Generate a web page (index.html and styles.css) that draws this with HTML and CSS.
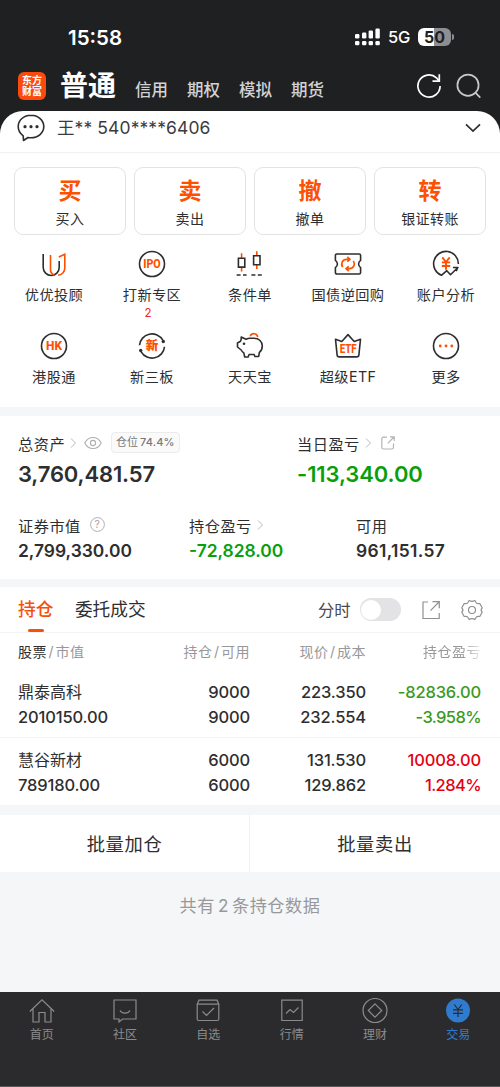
FILE: index.html
```html
<!DOCTYPE html>
<html lang="zh-CN">
<head>
<meta charset="utf-8">
<title>交易</title>
<link rel="stylesheet" href="styles.css">
</head>
<body>
<div class="screen">
  <header class="top">
    <div class="status">
      <span class="clock">15:58</span>
      <div class="status-right">
        <svg class="signal" width="26" height="18" viewBox="0 0 26 18" fill="#fff">
          <rect x="0" y="6" width="4.4" height="4.6" rx="1.3"/><rect x="7" y="4.4" width="4.4" height="6.2" rx="1.3"/><rect x="13.6" y="2.4" width="4.4" height="8.2" rx="1.3"/><rect x="20.4" y="0.4" width="4.4" height="10.2" rx="1.3"/>
          <rect x="0" y="13" width="4.4" height="4.2" rx="1.3"/><rect x="7" y="13" width="4.4" height="4.2" rx="1.3"/><rect x="13.6" y="13" width="4.4" height="4.2" rx="1.3"/><rect x="20.4" y="13" width="4.4" height="4.2" rx="1.3"/>
        </svg>
        <span class="net">5G</span>
        <div class="battery">50</div><i class="battery-tip"></i>
      </div>
    </div>
    <nav class="modes">
      <div class="logo"><span>东方</span><span>财富</span></div>
      <b class="mode-main">普通</b>
      <span class="mode">信用</span><span class="mode">期权</span><span class="mode">模拟</span><span class="mode">期货</span>
      <svg class="refresh" width="26" height="26" viewBox="0 0 26 26" fill="none" stroke="#fff" stroke-width="1.7"><path d="M24.1 13a11.1 11.1 0 1 1-3.6-8.2l2.3 2.8"/><path d="M23.3 1.2v7h-6.8"/></svg>
      <svg class="search" width="26" height="26" viewBox="0 0 26 26" fill="none" stroke="#c9c9c9" stroke-width="1.7" stroke-linecap="round"><circle cx="12" cy="12.2" r="10.6"/><path d="M19.6 19.8l4.2 4.4"/></svg>
    </nav>
  </header>

  <div class="sheet">
    <div class="account">
      <svg width="28" height="28" viewBox="0 0 28 28" fill="none" stroke="#2e2e30" stroke-width="1.6" stroke-linejoin="round"><path d="M14 1.3C6.9 1.3 1.2 6.1 1.2 12.6c0 4 2 7.2 5 9.3l.3 4.6 4.5-3c1 .2 2 .3 3 .3 7.1 0 12.8-4.8 12.8-11.2S21.1 1.3 14 1.3z"/><g fill="#2e2e30" stroke="none"><circle cx="8" cy="12.7" r="1.6"/><circle cx="14" cy="12.7" r="1.6"/><circle cx="20" cy="12.7" r="1.6"/></g></svg>
      <span class="account-name">王** 540****6406</span>
      <svg class="chev" width="16" height="10" viewBox="0 0 16 10" fill="none" stroke="#2e2e30" stroke-width="1.7"><path d="M1 1.3l7 6.7 7-6.7"/></svg>
    </div>

    <div class="actions">
      <div class="action"><b>买</b><span>买入</span></div>
      <div class="action"><b>卖</b><span>卖出</span></div>
      <div class="action"><b>撤</b><span>撤单</span></div>
      <div class="action"><b>转</b><span>银证转账</span></div>
    </div>

    <div class="tools">
      <div class="tool">
        <svg width="28" height="28" viewBox="0 0 28 28" fill="none" stroke-width="1.6"><path stroke="#2e2e30" d="M3.2 4v13.5a8 8 0 0 0 16 0V11"/><path stroke="#fd5000" d="M10.5 5v14.5c0 2.3 1.5 4.5 3.7 5.5M18.8 7l6-2.8v13.8c0 3.8-2.8 7-6.8 7.2"/></svg>
        <span>优优投顾</span>
      </div>
      <div class="tool">
        <svg width="28" height="28" viewBox="0 0 28 28"><circle cx="14" cy="14" r="12.5" fill="none" stroke="#2e2e30" stroke-width="1.6"/><text class="ico-text" x="14" y="18.2" font-size="12" textLength="17.5" lengthAdjust="spacingAndGlyphs">IPO</text></svg>
        <span>打新专区</span><em>2</em>
      </div>
      <div class="tool">
        <svg width="28" height="28" viewBox="0 0 28 28" fill="none" stroke-width="1.6"><path stroke="#fd5000" d="M5.6 3.2V9m0 8v4.5M20.8 1.3V6m0 9v4"/><path stroke="#2e2e30" d="M2.4 8.3h6.4v8.8H2.4zM17.6 5.8H24v9h-6.4z"/><path stroke="#2e2e30" stroke-dasharray="4 2.4" d="M.6 25h10M15.400 25h10.500"/></svg>
        <span>条件单</span>
      </div>
      <div class="tool">
        <svg width="28" height="28" viewBox="0 0 28 28" fill="none" stroke-width="1.6" stroke-linejoin="round"><path stroke="#2e2e30" d="M3 4h22q1.600 0 1.600 1.600v4.700c-1.300.9-2 2.200-2 3.700s.7 2.800 2 3.700v4.700q0 1.600-1.600 1.600H3q-1.600 0-1.600-1.600v-4.700c1.300-.9 2-2.200 2-3.700s-.7-2.800-2-3.700V5.600Q1.400 4 3 4z"/><path stroke="#fd5000" stroke-width="1.700" d="M8.600 17.200C6.500 13.500 8.500 9.300 12.500 9.300h3M13.300 6.800l2.700 2.500-2.700 2.300M19.400 10.800c2.100 3.700.1 7.900-3.900 7.900h-3M14.700 21.200L12 18.700l2.700-2.300"/></svg>
        <span>国债逆回购</span>
      </div>
      <div class="tool">
        <svg width="28" height="28" viewBox="0 0 28 28" fill="none" stroke-width="1.6" stroke-linejoin="round"><path stroke="#2e2e30" d="M26.400 14A12.400 12.400 0 1 0 9.400 25.300L14.800 20.700l3.700 4 7.400-7.200h-5M25.800 17.500l-1.600 3.600"/><path stroke="#fd5000" stroke-width="1.900" d="M10.300 7.300L14 12l3.700-4.700M14 12v7.800M9.800 12.400h8.400M9.800 16h8.400"/></svg>
        <span>账户分析</span>
      </div>
      <div class="tool">
        <svg width="28" height="28" viewBox="0 0 28 28"><circle cx="14" cy="14" r="12.5" fill="none" stroke="#2e2e30" stroke-width="1.6"/><text class="ico-text" x="14" y="18.2" font-size="12" textLength="16" lengthAdjust="spacingAndGlyphs">HK</text></svg>
        <span>港股通</span>
      </div>
      <div class="tool">
        <svg width="28" height="28" viewBox="0 0 28 28"><path d="M1.5 13.3A12.5 12.5 0 0 1 24.8 8.2M26.5 14.7A12.5 12.5 0 0 1 3.2 19.8" fill="none" stroke="#2e2e30" stroke-width="1.6"/><circle cx="25.3" cy="9.5" r="1.7" fill="#2e2e30"/><circle cx="2.7" cy="18.5" r="1.7" fill="#2e2e30"/><text class="ico-text" x="14" y="18.4" font-size="12.5">新</text></svg>
        <span>新三板</span>
      </div>
      <div class="tool">
        <svg width="28" height="28" viewBox="0 0 28 28" fill="none" stroke-width="1.6" stroke-linejoin="round"><path stroke="#2e2e30" d="M5.2 5l4.8 2.200c1.200-.6 2.600-.9 4-.9h4c5 0 8.300 3.300 8.300 7.800 0 2.800-1.100 5-3 6.500l-.6 3.900h-3.800l-.8-2h-5l-1 2.500H8.700l-.9-4.100c-1.200-.8-2-1.700-2.600-2.900L1.500 15v-4l3-1.700c.7-.8.8-2 .7-4.300z"/><circle cx="8" cy="11.700" r="1.300" fill="#2e2e30"/><path stroke="#fd5000" d="M14.200 4.200c1.300-3.500 6.600-3.500 7.600.8"/></svg>
        <span>天天宝</span>
      </div>
      <div class="tool">
        <svg width="28" height="28" viewBox="0 0 28 28"><path fill="none" stroke="#2e2e30" stroke-width="1.6" stroke-linejoin="round" d="M1.5 7.2l6.300 2.300L14 2.600l6.200 6.900 6.300-2.300-1.600 15.700q-.2 2-2.200 2H5.300q-2 0-2.200-2z"/><text class="ico-text" x="14.2" y="20.6" font-size="12" textLength="17" lengthAdjust="spacingAndGlyphs">ETF</text></svg>
        <span>超级ETF</span>
      </div>
      <div class="tool">
        <svg width="28" height="28" viewBox="0 0 28 28"><circle cx="14" cy="14" r="12.5" fill="none" stroke="#2e2e30" stroke-width="1.6"/><g fill="#fd5000"><circle cx="8.2" cy="14" r="1.4"/><circle cx="14" cy="14" r="1.4"/><circle cx="19.8" cy="14" r="1.4"/></g></svg>
        <span>更多</span>
      </div>
    </div>
  </div>

  <section class="assets">
    <div class="asset-row row-main">
      <div class="asset">
        <div class="label">总资产
          <svg class="arrow" width="7" height="10" viewBox="0 0 7 10" fill="none" stroke="#b9b9bb"><path d="M1 .5L5.500 5 1 9.500"/></svg>
          <svg class="eye" width="18" height="14" viewBox="0 0 18 14" fill="none" stroke="#aeaeb0" stroke-width="1.1"><path d="M.8 7C4.500-.4 13.500-.4 17.200 7 13.500 14.400 4.500 14.400.8 7z"/><circle cx="9" cy="7" r="2.6"/></svg>
          <span class="badge">仓位<b>74.4%</b></span>
        </div>
        <div class="value big total">3,760,481.57</div>
      </div>
      <div class="asset">
        <div class="label">当日盈亏
          <svg class="arrow" width="7" height="10" viewBox="0 0 7 10" fill="none" stroke="#b9b9bb"><path d="M1 .5L5.500 5 1 9.500"/></svg>
          <svg class="share" width="14" height="14" viewBox="0 0 14 14" fill="none" stroke="#b4b4b6" stroke-width="1.2"><path d="M6 1.200H2.500Q.8 1.200.8 3v8.200q0 1.800 1.700 1.800h8.200q1.800 0 1.800-1.800V7.500M9 .8h4.200V5M13 1L6.800 7.300"/></svg>
        </div>
        <div class="value big gain-neg day">-113,340.00</div>
      </div>
    </div>
    <div class="asset-row row-sub">
      <div class="asset">
        <div class="label">证券市值
          <svg class="help" width="15" height="15" viewBox="0 0 15 15"><circle cx="7.5" cy="7.5" r="6.9" fill="none" stroke="#b0b0b2"/><text x="7.5" y="11.2" font-size="10.5" text-anchor="middle" fill="#a5a5a8">?</text></svg>
        </div>
        <div class="value">2,799,330.00</div>
      </div>
      <div class="asset">
        <div class="label">持仓盈亏
          <svg class="arrow" width="7" height="10" viewBox="0 0 7 10" fill="none" stroke="#b9b9bb"><path d="M1 .5L5.500 5 1 9.500"/></svg>
        </div>
        <div class="value gain-neg">-72,828.00</div>
      </div>
      <div class="asset">
        <div class="label">可用</div>
        <div class="value available">961,151.57</div>
      </div>
    </div>
  </section>

  <section class="positions">
    <div class="tabs">
      <span class="tab active">持仓</span>
      <span class="tab">委托成交</span>
      <span class="split-label">分时</span>
      <i class="switch"></i>
      <svg class="export" width="20" height="20" viewBox="0 0 20 20" fill="none" stroke="#909093" stroke-width="1.2"><path d="M7 2H2v16.500h16.200V13M11.500 1.700h6.800v6.600M18 2l-8.500 8.700"/></svg>
      <svg class="gear" width="22" height="22" viewBox="0 0 22 22" fill="none" stroke="#909093" stroke-width="1.2" stroke-linejoin="round"><path d="M8.200 1.500Q11 3.300 13.800 1.500l1.800 2.800q1.400.7 3.200.2l2.400 4.300q-2.200 2.200 0 4.400l-2.400 4.300q-1.800-.5-3.200.2l-1.800 2.800q-2.800-1.800-5.600 0l-1.800-2.800q-1.400-.7-3.200-.2L.8 13.200q2.200-2.200 0-4.400l2.400-4.300q1.800.5 3.200-.2z"/><circle cx="11" cy="11" r="3.5"/></svg>
    </div>
    <div class="grid head">
      <span><strong>股票</strong><i>/</i>市值</span><span>持仓<i>/</i>可用</span><span>现价<i>/</i>成本</span><span class="faded">持仓盈亏</span>
    </div>
    <div class="grid holding">
      <span class="stock">鼎泰高科</span><span>9000</span><span>223.350</span><span class="down">-82836.00</span>
      <span>2010150.00</span><span>9000</span><span>232.554</span><span class="down rate">-3.958%</span>
    </div>
    <div class="grid holding second">
      <span class="stock">慧谷新材</span><span>6000</span><span>131.530</span><span class="up">10008.00</span>
      <span>789180.00</span><span>6000</span><span>129.862</span><span class="up rate">1.284%</span>
    </div>
  </section>

  <div class="batch"><span>批量加仓</span><span>批量卖出</span></div>
  <p class="summary">共有<b>2</b>条持仓数据</p>

  <nav class="tabbar">
    <div><svg width="26" height="26" viewBox="0 0 26 26"><path d="M.8 13.500L13 1.800l12.200 11.700M4 11v13h6v-9.500h6V24h6V11"/></svg><span>首页</span></div>
    <div><svg width="26" height="26" viewBox="0 0 26 26"><path d="M2 2h22v19H10.500L7 24v-3H2zM8 12.500c2 3.500 8 3.500 10 0"/></svg><span>社区</span></div>
    <div><svg width="26" height="26" viewBox="0 0 26 26"><path d="M2.200 6.200L4 2.200h18l1.800 4V21q0 1.500-1.500 1.500H3.700q-1.500 0-1.500-1.500zM2.200 6.200h21.600M7.500 13.500l4 4L19 10"/></svg><span>自选</span></div>
    <div><svg width="26" height="26" viewBox="0 0 26 26"><path d="M2.800 2.200h20.400v20.300H2.800zM7 15.500l4-4 3.500 3 5-5"/></svg><span>行情</span></div>
    <div><svg width="26" height="26" viewBox="0 0 26 26"><circle cx="13" cy="12.5" r="12"/><path d="M13 5.800l6.700 6.700-6.700 6.700-6.700-6.700z"/></svg><span>理财</span></div>
    <div class="current"><svg width="26" height="26" viewBox="0 0 26 26"><circle cx="13" cy="12.5" r="12"/><path d="M9.300 6.500l3.700 5 3.700-5M13 11.500v7.500M8 11.800h10M8 15.300h10"/></svg><span>交易</span></div>
  </nav>
</div>
</body>
</html>
```
FILE: styles.css
```css
* { box-sizing: border-box; }
body {
  margin: 0;
  font-family: Inter, "Noto Sans CJK SC", sans-serif;
  color: #2e2e30;
  background: #f5f6f8;
}
i, em { font-style: normal; }
svg { display: block; flex: none; }
.screen { width: 500px; height: 1087px; display: flex; flex-direction: column; overflow: hidden; }

/* dark header */
.top { background: #1f2022; height: 134px; flex: none; color: #fff; }
.status { height: 62px; padding: 26px 46px 0 68px; display: flex; justify-content: space-between; align-items: flex-start; }
.clock { font-size: 20.5px; font-weight: 600; line-height: 24px; }
.status-right { display: flex; align-items: center; height: 22px; }
.net { font-size: 16.5px; font-weight: 500; margin-left: 7px; width: 22px; letter-spacing: -0.3px; }
.battery {
  margin-left: 8px; width: 33px; height: 18px; border-radius: 6px;
  background: linear-gradient(90deg, #fff 50%, #8e8e92 50%);
  color: #1f2022; font-size: 16px; font-weight: 700; line-height: 18px; text-align: center;
}
.battery-tip { width: 2px; height: 6px; margin-left: 1px; border-radius: 0 2px 2px 0; background: #8e8e92; }
.modes { height: 50px; padding: 0 18px; display: flex; align-items: center; }
.logo {
  width: 28px; height: 28px; border-radius: 6px; background: #fa4a0c; flex: none;
  display: flex; flex-direction: column; align-items: center; justify-content: center;
  font-size: 10px; line-height: 11.5px; font-weight: 700;
  margin-bottom: 2px;
}
.mode-main { font-size: 28px; line-height: 40px; font-weight: 700; margin: 0 3px 2px 14px; }
.mode { font-size: 16.5px; line-height: 24px; font-weight: 500; color: #d2d2d3; margin: 5px 0 0 16px; width: 36px; white-space: nowrap; }
.refresh { margin: 0 0 2px auto; }
.search { margin: 0 0 2px 14px; }

/* account sheet */
.sheet { margin-top: -23px; background: #fff; border-radius: 23px 23px 0 0; height: 296px; flex: none; }
.account { height: 42px; display: flex; align-items: center; padding: 0 19px 7px 17px; border-bottom: 1px solid #f1f1f2; }
.account-name { font-size: 17.5px; line-height: 24px; margin-left: 12px; letter-spacing: 0.1px; color: #3c3c3e; }
.chev { margin-left: auto; }
.actions { display: grid; grid-template-columns: repeat(4, 1fr); gap: 8px; padding: 14px 14px 0; }
.action {
  height: 68px; border: 1px solid #e3e3e4; border-radius: 9px;
  display: flex; flex-direction: column; align-items: center;
}
.action b { color: #fd5000; font-size: 23px; line-height: 30px; font-weight: 700; margin-top: 8px; }
.action span { font-size: 14px; line-height: 20px; margin-top: 3px; letter-spacing: 0.4px; }
.tools { display: grid; grid-template-columns: repeat(5, 98px); grid-auto-rows: 82px; padding: 15px 5px 0; }
.tool { display: flex; flex-direction: column; align-items: center; }
.tool span { font-size: 14.2px; line-height: 20px; margin-top: 7px; letter-spacing: 0.4px; white-space: nowrap; }
.tool em { color: #f0202c; font-size: 11.5px; line-height: 14px; margin-top: 1px; margin-right: 8px; }
.ico-text { font-family: Roboto, "Noto Sans CJK SC", sans-serif; fill: #fd5000; font-weight: 800; text-anchor: middle; }

/* assets */
.assets { margin-top: 9px; background: #fff; height: 163px; flex: none; padding: 15px 18px 0; }
.asset-row { display: grid; }
.row-main { grid-template-columns: 279px 1fr; height: 82px; }
.row-sub { grid-template-columns: 171px 167px 1fr; }
.label { display: flex; align-items: center; height: 23px; font-size: 15.2px; letter-spacing: 0.5px; white-space: nowrap; }
.value { font-size: 17.4px; line-height: 24px; font-weight: 600; margin-top: 3px; }
.value.big { font-size: 22px; line-height: 30px; margin-top: 5px; }
.value.total { letter-spacing: -0.15px; }
.value.day { letter-spacing: -0.1px; }
.value.available { letter-spacing: 0.35px; }
.gain-neg { color: #0a9f0a; }
.arrow { margin-left: 5px; }
.eye { margin-left: 7px; }
.share { margin-left: 9px; }
.help { margin-left: 9px; }
.badge {
  margin-left: 9px; height: 21px; padding: 0 4px; border: 1px solid #ececed; border-radius: 4px; background: #fafafa;
  font-size: 11px; line-height: 19px; color: #77777a; letter-spacing: 0;
}
.badge b { font-weight: 500; margin-left: 2px; letter-spacing: 0.1px; }

/* positions */
.positions { margin-top: 8px; background: #fff; height: 218px; flex: none; }
.tabs { height: 46px; display: flex; align-items: center; padding: 0 17px 0 18px; border-bottom: 1px solid #f3f3f4; }
.tab { font-size: 17.7px; line-height: 45px; height: 45px; margin-right: 21.5px; font-weight: 400; white-space: nowrap; }
.tab.active { color: #f4510a; font-weight: 500; display: flex; flex-direction: column; align-items: center; }
.tab.active::after { content: ""; width: 16px; height: 3px; margin-top: -3px; border-radius: 1.5px; background: #f4510a; flex: none; }
.split-label { font-size: 16.3px; line-height: 24px; margin-left: auto; color: #4a4a4c; }
.switch { width: 41px; height: 23px; border-radius: 12px; background: #e3e3e5; margin-left: 9px; padding: 1.5px; }
.switch::before { content: ""; display: block; width: 20px; height: 20px; border-radius: 50%; background: #fff; }
.export { margin-left: 20.5px; }
.gear { margin-left: 20px; }
.grid { display: grid; grid-template-columns: 131px 101px 116px 115px; padding: 0 18px; text-align: right; white-space: nowrap; }
.grid > :nth-child(4n + 1) { text-align: left; }
.head { height: 46px; font-size: 14px; line-height: 37px; color: #98989b; letter-spacing: 0.5px; }
.head i { margin: 0 1.5px; }
.head strong { font-weight: 400; color: #2e2e30; }
.faded { -webkit-mask-image: linear-gradient(90deg, #000 84%, rgba(0, 0, 0, 0.2)); mask-image: linear-gradient(90deg, #000 84%, rgba(0, 0, 0, 0.2)); }
.holding { height: 59px; font-size: 16.5px; letter-spacing: -0.15px; font-weight: 500; grid-auto-rows: 24.5px; line-height: 24.5px; padding-top: 1px; border-bottom: 1px solid #f5f5f6; }
.holding.second { height: 66px; padding-top: 10px; border-bottom: 0; }
.holding .stock { font-weight: 400; font-size: 16px; letter-spacing: 0; }
.holding .rate { letter-spacing: -0.6px; }
.down { color: #3a9a22; }
.up { color: #e60012; }

.batch { margin-top: 10px; height: 57px; flex: none; background: #fff; display: grid; grid-template-columns: 1fr 1fr; text-align: center; font-size: 18.3px; line-height: 58px; letter-spacing: 0.6px; }
.batch span:first-child { border-right: 1px solid #f1f1f2; }
.summary { margin: 22px 0 0; text-align: center; font-size: 17.2px; line-height: 24px; color: #98989b; letter-spacing: 0.5px; }
.summary b { font-weight: 400; margin: 0 3px; }

/* bottom bar */
.tabbar { margin-top: auto; height: 95px; flex: none; background: #2b2b2d; border-bottom: 1px solid #58585a; display: grid; grid-template-columns: repeat(6, 1fr); padding-top: 6px; color: #8b8b8d; }
.tabbar div { display: flex; flex-direction: column; align-items: center; }
.tabbar svg { fill: none; stroke: #8b8b8d; stroke-width: 1.2; }
.tabbar span { font-size: 12px; line-height: 18px; margin-top: 2px; }
.tabbar .current { color: #2f7bd0; }
.current circle { fill: #2f7bd0; stroke: none; }
.tabbar .current path { stroke: #2b2b2d; }
```
